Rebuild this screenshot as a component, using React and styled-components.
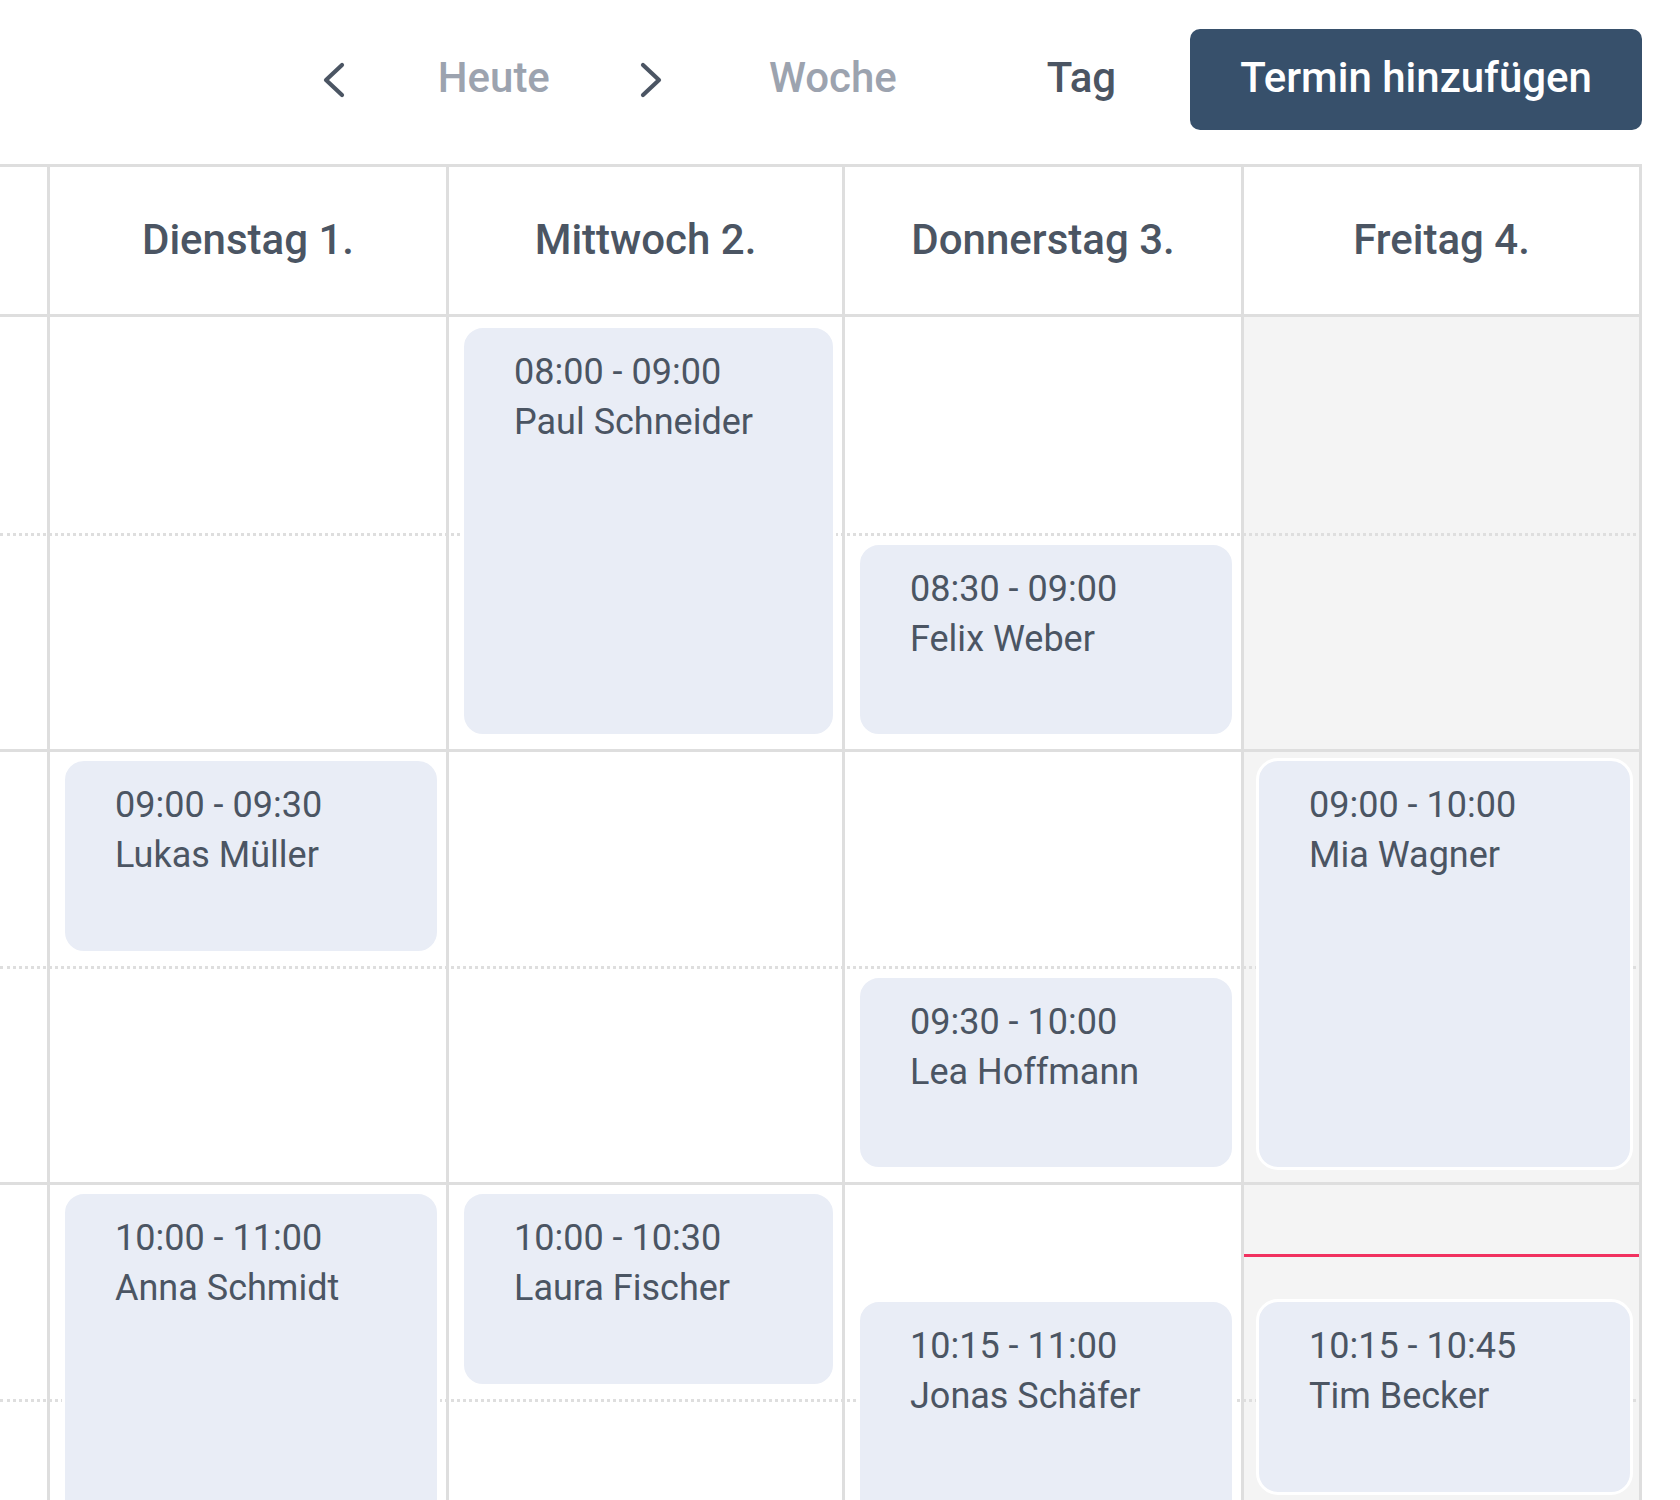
import React from 'react';
import styled, { createGlobalStyle } from 'styled-components';

const HOUR = 433;
const START_HOUR = 8;
const ROWS = 6;

const days = [
  { label: 'Dienstag 1.' },
  { label: 'Mittwoch 2.' },
  { label: 'Donnerstag 3.' },
  { label: 'Freitag 4.', today: true },
];

const events = [
  { day: 0, start: '09:00', end: '09:30', name: 'Lukas Müller' },
  { day: 0, start: '10:00', end: '11:00', name: 'Anna Schmidt' },
  { day: 1, start: '08:00', end: '09:00', name: 'Paul Schneider' },
  { day: 1, start: '10:00', end: '10:30', name: 'Laura Fischer' },
  { day: 2, start: '08:30', end: '09:00', name: 'Felix Weber' },
  { day: 2, start: '09:30', end: '10:00', name: 'Lea Hoffmann' },
  { day: 2, start: '10:15', end: '11:00', name: 'Jonas Schäfer' },
  { day: 3, start: '09:00', end: '10:00', name: 'Mia Wagner' },
  { day: 3, start: '10:15', end: '10:45', name: 'Tim Becker' },
];

const NOW = '10:10';

const toY = (t) => {
  const [h, m] = t.split(':').map(Number);
  return (h - START_HOUR + m / 60) * HOUR;
};

const LINE = '#dedede';

const GlobalStyle = createGlobalStyle`
  html, body {
    margin: 0;
    padding: 0;
    background: #ffffff;
  }
  body {
    font-family: Roboto, "Liberation Sans", Arial, sans-serif;
  }
`;

const Page = styled.div`
  width: 1680px;
  height: 1500px;
  overflow: hidden;
  box-sizing: border-box;
  padding-right: 38px;
`;

const Toolbar = styled.div`
  height: 164px;
  box-sizing: border-box;
  padding-bottom: 6px;
  display: flex;
  align-items: center;
  justify-content: flex-end;
`;

const NavButton = styled.button`
  border: none;
  background: none;
  padding: ${(p) => (p.$icon ? '2px 0 0' : '0 0 3px')};
  margin-left: ${(p) => p.$gap || 0}px;
  font-family: inherit;
  font-size: 42px;
  font-weight: 500;
  line-height: 1.17;
  color: ${(p) => (p.$active ? '#4b5563' : '#9ca3af')};
  display: flex;
  align-items: center;
  cursor: pointer;
`;

const Chevron = styled.svg`
  display: block;
  width: 22px;
  height: 36px;
`;

const PrimaryButton = styled.button`
  margin-left: 74px;
  height: 101px;
  padding: 0 50px 3px;
  border: none;
  border-radius: 10px;
  background: #37506b;
  color: #ffffff;
  font-family: inherit;
  font-size: 42px;
  font-weight: 500;
  cursor: pointer;
`;

const Columns = `
  display: grid;
  grid-template-columns: 47px 399px 396px 399px 1fr;
`;

const HeaderRow = styled.div`
  ${Columns}
  height: 153px;
  box-sizing: border-box;
  border-top: 3px solid ${LINE};
  border-bottom: 3px solid ${LINE};
`;

const HeaderCell = styled.div`
  display: flex;
  align-items: center;
  justify-content: center;
  border-left: 3px solid ${LINE};
  border-right: ${(p) => (p.$last ? `3px solid ${LINE}` : 'none')};
  font-size: 42px;
  font-weight: 500;
  color: #4b5563;
  padding-bottom: 3px;
`;

const Gutter = styled.div`
  grid-row: 1 / -1;
  grid-column: 1;
`;

const Body = styled.div`
  ${Columns}
  grid-template-rows: repeat(${ROWS}, ${HOUR / 2}px);
`;

const SlotLine = styled.div`
  grid-column: 1 / -1;
  grid-row: ${(p) => p.$row};
  position: relative;
  z-index: 1;
  pointer-events: none;
  border-top: ${(p) =>
    p.$kind === 'hour' ? `3px solid ${LINE}` : p.$kind === 'half' ? `3px dotted ${LINE}` : 'none'};
  margin-top: -1px;
`;

const DayColumn = styled.div`
  grid-row: 1 / -1;
  grid-column: ${(p) => p.$col};
  position: relative;
  border-left: 3px solid ${LINE};
  border-right: ${(p) => (p.$last ? `3px solid ${LINE}` : 'none')};
  background: ${(p) => (p.$today ? '#f4f4f4' : '#ffffff')};
`;

const EventCard = styled.div`
  position: absolute;
  left: 12px;
  right: 6px;
  z-index: 2;
  box-sizing: border-box;
  border: 3px solid #ffffff;
  border-radius: 22px;
  background: #e9edf6;
  padding: 19px 20px 0 50px;
  font-size: 36px;
  line-height: 50px;
  color: #4b5563;
  overflow: hidden;
`;

const EventLine = styled.div`
  white-space: nowrap;
`;

const NowLine = styled.div`
  position: absolute;
  left: 0;
  right: 0;
  height: 3px;
  background: #f1315f;
  z-index: 2;
`;

const ChevronIcon = ({ dir }) => (
  <Chevron viewBox="0 0 22 36">
    <polyline
      points={dir === 'left' ? '19,3 3,18 19,33' : '3,3 19,18 3,33'}
      fill="none"
      stroke="#4b5563"
      strokeWidth="4.2"
      strokeLinecap="round"
      strokeLinejoin="round"
    />
  </Chevron>
);

export default function App() {
  const nowY = toY(NOW);
  return (
    <>
      <GlobalStyle />
      <Page>
        <Toolbar>
          <NavButton $icon aria-label="Zurück">
            <ChevronIcon dir="left" />
          </NavButton>
          <NavButton $gap={93}>Heute</NavButton>
          <NavButton $icon $gap={90} aria-label="Weiter">
            <ChevronIcon dir="right" />
          </NavButton>
          <NavButton $gap={107}>Woche</NavButton>
          <NavButton $gap={150} $active>
            Tag
          </NavButton>
          <PrimaryButton>Termin hinzufügen</PrimaryButton>
        </Toolbar>

        <HeaderRow>
          <div />
          {days.map((d, i) => (
            <HeaderCell key={d.label} $last={i === days.length - 1}>
              {d.label}
            </HeaderCell>
          ))}
        </HeaderRow>

        <Body>
          <Gutter />
          {days.map((d, i) => (
            <DayColumn key={d.label} $col={i + 2} $today={d.today} $last={i === days.length - 1}>
              {d.today && <NowLine style={{ top: nowY - 1 }} />}
              {events
                .filter((e) => e.day === i)
                .map((e) => {
                  const top = toY(e.start) + 8;
                  const height = toY(e.end) - 13 - top;
                  return (
                    <EventCard key={e.name} style={{ top, height }}>
                      <EventLine>
                        {e.start} - {e.end}
                      </EventLine>
                      <EventLine>{e.name}</EventLine>
                    </EventCard>
                  );
                })}
            </DayColumn>
          ))}
          {Array.from({ length: ROWS }).map((_, r) => (
            <SlotLine key={r} $row={r + 1} $kind={r === 0 ? 'none' : r % 2 === 0 ? 'hour' : 'half'} />
          ))}
        </Body>
      </Page>
    </>
  );
}
